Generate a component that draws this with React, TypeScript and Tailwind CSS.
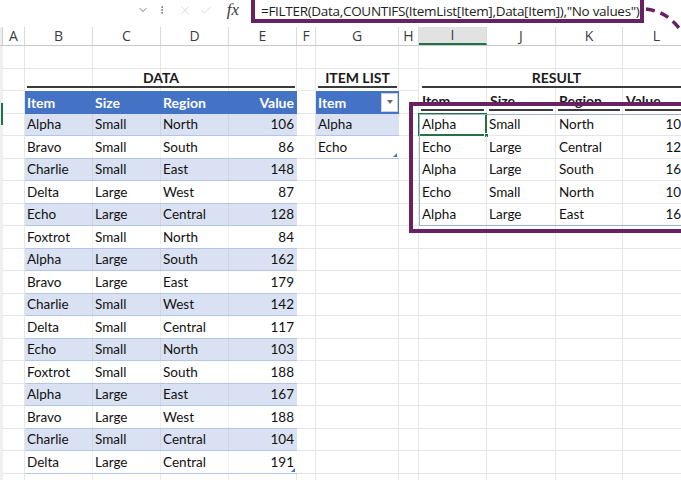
import React from 'react';
import { ChevronDown, EllipsisVertical, X, Check } from 'lucide-react';

const W: Record<string, string> = {
  A: 'w-[22px]',
  B: 'w-[68px]',
  C: 'w-[68px]',
  D: 'w-[68px]',
  E: 'w-[68px]',
  F: 'w-[19px]',
  G: 'w-[83px]',
  H: 'w-[20px]',
  I: 'w-[68px]',
  J: 'w-[69px]',
  K: 'w-[67px]',
  L: 'w-[68px]',
};

const ROWS = 20;
const RH = 'h-[22.5px]';

const DATA: [string, string, string, number][] = [
  ['Alpha', 'Small', 'North', 106],
  ['Bravo', 'Small', 'South', 86],
  ['Charlie', 'Small', 'East', 148],
  ['Delta', 'Large', 'West', 87],
  ['Echo', 'Large', 'Central', 128],
  ['Foxtrot', 'Small', 'North', 84],
  ['Alpha', 'Large', 'South', 162],
  ['Bravo', 'Large', 'East', 179],
  ['Charlie', 'Small', 'West', 142],
  ['Delta', 'Small', 'Central', 117],
  ['Echo', 'Small', 'North', 103],
  ['Foxtrot', 'Small', 'South', 188],
  ['Alpha', 'Large', 'East', 167],
  ['Bravo', 'Large', 'West', 188],
  ['Charlie', 'Small', 'Central', 104],
  ['Delta', 'Large', 'Central', 191],
];

const RESULT: [string, string, string, number][] = [
  ['Alpha', 'Small', 'North', 106],
  ['Echo', 'Large', 'Central', 128],
  ['Alpha', 'Large', 'South', 162],
  ['Echo', 'Small', 'North', 103],
  ['Alpha', 'Large', 'East', 167],
];

function EmptyRow({ cols }: { cols: string[] }) {
  return (
    <div className={`flex ${RH}`}>
      {cols.map((c, i) => (
        <div key={i} className={`${W[c]} h-full shrink-0 border-r border-b border-[#e6e6e6]`} />
      ))}
    </div>
  );
}

function EmptyCol({ col, rows }: { col: string; rows: number }) {
  return (
    <div className="flex flex-col">
      {Array.from({ length: rows }).map((_, i) => (
        <EmptyRow key={i} cols={[col]} />
      ))}
    </div>
  );
}

function Title({ text, cols, inset }: { text: string; cols: string[]; inset?: string }) {
  return (
    <div className={`flex ${RH} relative`}>
      {cols.map((c, i) => (
        <div key={i} className={`${W[c]} h-full shrink-0 border-r border-[#e6e6e6]`} />
      ))}
      <div className={`absolute inset-0 flex items-end pb-[3px] ${inset ?? 'px-[2px]'}`}>
        <div className="w-full border-b-2 border-[#3a3a3a] text-center font-bold text-[14px] leading-[17px] text-[#1a1a1a]">
          {text}
        </div>
      </div>
    </div>
  );
}

function ResizeHandle() {
  return (
    <div className="absolute right-[2px] bottom-[1px] w-0 h-0 border-l-[4px] border-l-transparent border-b-[4px] border-b-[#4472c4]" />
  );
}

function DataBlock() {
  const cols = ['B', 'C', 'D', 'E'];
  return (
    <div className="flex flex-col w-[272px] shrink-0">
      <EmptyRow cols={cols} />
      <Title text="DATA" cols={cols} />
      <div className={`flex ${RH} bg-[#4472c4] text-white font-bold text-[14px]`}>
        <div className={`${W.B} px-[2px] flex items-center`}>Item</div>
        <div className={`${W.C} px-[2px] flex items-center`}>Size</div>
        <div className={`${W.D} px-[2px] flex items-center`}>Region</div>
        <div className={`${W.E} pr-[3px] flex items-center justify-end`}>Value</div>
      </div>
      {DATA.map((r, i) => (
        <div
          key={i}
          className={`flex ${RH} relative text-[13.5px] text-[#111] border-b border-[#b4c6e7] ${i % 2 === 0 ? 'bg-[#d9e1f2]' : 'bg-white'}`}
        >
          <div className={`${W.B} px-[2px] flex items-center border-r border-black/5`}>{r[0]}</div>
          <div className={`${W.C} px-[2px] flex items-center border-r border-black/5`}>{r[1]}</div>
          <div className={`${W.D} px-[2px] flex items-center border-r border-black/5`}>{r[2]}</div>
          <div className={`${W.E} pr-[3px] flex items-center justify-end`}>{r[3]}</div>
          {i === DATA.length - 1 && <ResizeHandle />}
        </div>
      ))}
      <EmptyRow cols={cols} />
    </div>
  );
}

function ItemListBlock() {
  return (
    <div className="flex flex-col w-[83px] shrink-0">
      <EmptyRow cols={['G']} />
      <Title text="ITEM LIST" cols={['G']} />
      <div className={`flex ${RH} bg-[#4472c4] text-white font-bold text-[14px] items-center`}>
        <div className="pl-[2px]">Item</div>
        <div className="ml-auto mr-[1px] w-[17px] h-[19px] bg-white border border-[#d0d0d0] flex items-center justify-center">
          <div className="w-0 h-0 border-l-[3.5px] border-r-[3.5px] border-t-[4px] border-l-transparent border-r-transparent border-t-[#6b6b6b]" />
        </div>
      </div>
      <div className={`flex ${RH} items-center px-[2px] text-[13.5px] text-[#111] bg-[#d9e1f2] border-b border-[#b4c6e7]`}>Alpha</div>
      <div className={`flex ${RH} relative items-center px-[2px] text-[13.5px] text-[#111] bg-white border-b border-[#b4c6e7]`}>
        Echo
        <ResizeHandle />
      </div>
      {Array.from({ length: ROWS - 5 }).map((_, i) => (
        <EmptyRow key={i} cols={['G']} />
      ))}
    </div>
  );
}

function ResultBlock() {
  const cols = ['I', 'J', 'K', 'L'];
  const heads = ['Item', 'Size', 'Region', 'Value'];
  return (
    <div className="flex flex-col w-[272px] shrink-0">
      <EmptyRow cols={cols} />
      <Title text="RESULT" cols={cols} inset="pl-[3px] pr-0" />
      <div className={`flex ${RH}`}>
        {cols.map((c, i) => (
          <div key={c} className={`${W[c]} h-full flex flex-col justify-end pb-[3px] px-[2px] border-r border-[#e6e6e6]`}>
            <div className="border-b-2 border-[#3a3a3a] font-bold text-[14px] leading-[16px] text-[#1a1a1a] pl-[1px]">
              {heads[i]}
            </div>
          </div>
        ))}
      </div>
      <div className="relative flex flex-col">
        {RESULT.map((r, i) => (
          <div key={i} className={`flex ${RH} text-[13.5px] text-[#111]`}>
            <div className={`${W.I} relative px-[3px] flex items-center border-r border-b border-[#e6e6e6]`}>
              {r[0]}
              {i === 0 && (
                <>
                  <div className="absolute -left-[1px] -top-[1px] -right-[1px] -bottom-[1px] border-2 border-[#217346]" />
                  <div className="absolute -right-[3px] -bottom-[3px] w-[5px] h-[5px] bg-[#217346] border border-white" />
                </>
              )}
            </div>
            <div className={`${W.J} px-[2px] flex items-center border-r border-b border-[#e6e6e6]`}>{r[1]}</div>
            <div className={`${W.K} px-[3px] flex items-center border-r border-b border-[#e6e6e6]`}>{r[2]}</div>
            <div className={`${W.L} pr-[1px] flex items-center justify-end border-r border-b border-[#e6e6e6]`}>{r[3]}</div>
          </div>
        ))}
        <div className="absolute inset-0 border border-[#9fb3d1] pointer-events-none" />
      </div>
      {Array.from({ length: ROWS - 8 }).map((_, i) => (
        <EmptyRow key={i} cols={cols} />
      ))}
    </div>
  );
}

const LETTERS = ['A', 'B', 'C', 'D', 'E', 'F', 'G', 'H', 'I', 'J', 'K', 'L'];

export default function App() {
  return (
    <div className="relative w-[681px] h-[480px] overflow-hidden bg-white font-['Lato',sans-serif]">
      {/* top formula bar */}
      <div className="flex items-start h-[27px] bg-white">
        <div className="w-[137px] shrink-0" />
        <div className="w-[12px] h-[20px] flex items-center justify-center text-[#5a5a5a]">
          <ChevronDown size={12} strokeWidth={1.6} />
        </div>
        <div className="ml-[8px] w-[10px] h-[20px] flex items-center justify-center text-[#6a6a6a]">
          <EllipsisVertical size={14} strokeWidth={2.2} />
        </div>
        <div className="ml-[11px] w-[14px] h-[20px] flex items-center justify-center text-[#c9c9c9]">
          <X size={15} strokeWidth={1.1} />
        </div>
        <div className="ml-[7px] w-[14px] h-[20px] flex items-center justify-center text-[#c9c9c9]">
          <Check size={15} strokeWidth={1.1} />
        </div>
        <div className="ml-[13px] w-[14px] h-[20px] flex items-center justify-center font-['Liberation_Serif',serif] italic text-[17px] text-[#3a3a3a]">
          fx
        </div>
        <div className="ml-[11px] -mt-[5px] w-[393px] h-[28px] shrink-0 border-4 border-[#682162] bg-white flex items-center pl-[6px] pt-[4px] font-['Open_Sans',sans-serif] text-[13.5px] tracking-[-0.3px] text-[#222] whitespace-nowrap">
          =FILTER(Data,COUNTIFS(ItemList[Item],Data[Item]),"No values")
        </div>
      </div>

      {/* column headers */}
      <div className="flex h-[19px] border-b border-[#c8c8c8] font-['Open_Sans',sans-serif] text-[14px] text-[#3c3c3c]">
        <div className="w-[3px] shrink-0 bg-[#eeeeee] border-r border-[#d0d0d0]" />
        {LETTERS.map((l) => (
          <div
            key={l}
            className={`${W[l]} shrink-0 flex items-center justify-center border-r border-[#dadada] leading-none ${l === 'I' ? 'bg-[#e2e2e2] border-b-2 border-b-[#217346]' : ''}`}
          >
            {l}
          </div>
        ))}
      </div>

      {/* body */}
      <div className="flex">
        <div className="w-[3px] shrink-0 bg-[#f0f0f0] flex flex-col">
          <div className="mt-[57px] h-[22px] w-[3px] bg-[#f0f0f0] border-r-2 border-[#217346]" />
        </div>
        <EmptyCol col="A" rows={ROWS} />
        <DataBlock />
        <EmptyCol col="F" rows={ROWS} />
        <ItemListBlock />
        <EmptyCol col="H" rows={ROWS} />
        <ResultBlock />
      </div>

      {/* annotation: purple box around result */}
      <div className="absolute left-[409px] top-[102px] w-[300px] h-[131px] border-4 border-[#682162] pointer-events-none" />

      {/* annotation: dashed connector */}
      <svg className="absolute left-0 top-0 pointer-events-none" width="681" height="80" viewBox="0 0 681 80">
        <path
          d="M646 9 C662 11 677 19 690 46"
          fill="none"
          stroke="#682162"
          strokeWidth="3.5"
          strokeDasharray="9 6"
        />
      </svg>
    </div>
  );
}
